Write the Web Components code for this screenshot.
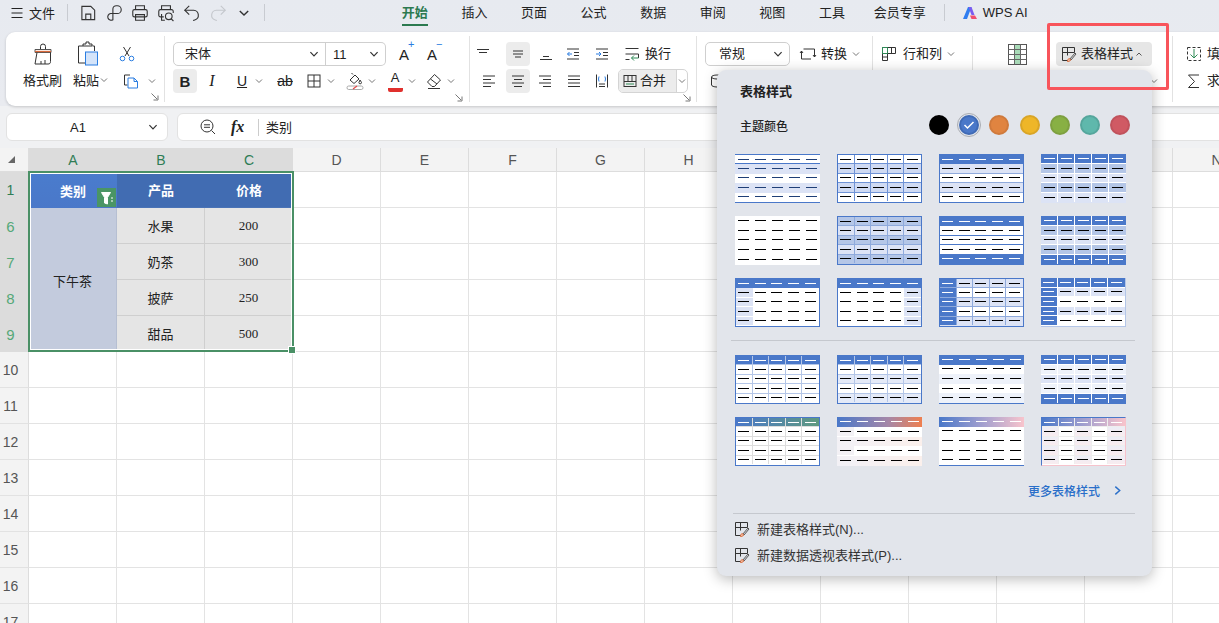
<!DOCTYPE html>
<html lang="zh">
<head>
<meta charset="UTF-8" />
<title>表格样式</title>
<style>
  html, body { margin: 0; height: 100%; overflow: hidden; background: #fff; }
  body { font-family: "Liberation Sans", "Noto Sans CJK SC", sans-serif; color: #262626; }
</style>
</head>
<body>
<x-app></x-app>
<script>
const ICONS = {
  save: [18, '<path d="M3.5 3h8l3.5 3.5v8.5H3.5z"/><path d="M7 15v-5h4.5v5"/>'],
  pdf: [18, '<path d="M8 15.5V5.5a3 3 0 0 1 3-3h1a3.5 3.5 0 0 1 0 7H6a3 3 0 1 0 2 5.5"/>'],
  print: [18, '<path d="M5 6V2.5h8V6"/><rect x="2.5" y="6" width="13" height="6.5" rx="1.5"/><path d="M5 10.5h8v5H5z"/>'],
  preview: [18, '<path d="M5 6V2.5h8V6"/><path d="M7 12.5H4a1.5 1.5 0 0 1-1.500-1.500V7.500A1.500 1.500 0 0 1 4 6h10a1.500 1.500 0 0 1 1.500 1.500V9"/><path d="M5 10v5.500h3"/><circle cx="11.500" cy="12" r="3"/><path d="M13.700 14.200l2 2"/>'],
  undo: [18, '<path d="M6.500 2.500L2.500 6.500l4 4"/><path d="M2.500 6.500h8a4.500 4.500 0 0 1 1 8.800l-1.500.500"/>'],
  redo: [18, '<path d="M11.500 2.500l4 4-4 4" stroke="#c4c7cc"/><path d="M15.500 6.500h-8a4.500 4.500 0 0 0-1 8.800l1.500.500" stroke="#c4c7cc"/>'],
  chev: [10, '<path d="M2 3.500l3 3 3-3"/>'],
  chevg: [10, '<path d="M2 3.500l3 3 3-3" stroke="#777"/>'],
  chevup: [10, '<path d="M2.500 6.500l2.500-2.500 2.500 2.500" stroke="#555"/>'],
  menu: [14, '<path d="M1.500 2.500h11M1.500 7h11M1.500 11.500h11" stroke="#222"/>'],
  brush: [26, '<path d="M10.500 8V5.500a2.500 2.500 0 0 1 5 0V8"/><path d="M5 8.500h16v3H5z" stroke="#555"/><path d="M5 10.500h16" stroke="#d9693a" stroke-width="1.300"/><path d="M7 11.500l-2 11.500h13c1.500 0 2.500-.5 2.500-2.500v-9"/><path d="M11 23v-3M15 23v-4"/>'],
  paste: [26, '<path d="M9 5H4.500v17H11"/><path d="M9 5V3h3V1h3v2h3v2H9z"/><path d="M18.500 5h2v5"/><rect x="11.500" y="11" width="12" height="13" fill="#d4e4fa" stroke="#2a7de1"/>'],
  cut: [18, '<path d="M5.500 2l5.500 9M12.500 2L7 11"/><circle cx="4.500" cy="13.500" r="2.300" stroke="#2a7de1"/><circle cx="13.500" cy="13.500" r="2.300" stroke="#2a7de1"/>'],
  copy: [18, '<path d="M8 3H2.500v10H5.500"/><path d="M6 6h6l3.500 3.500V16H6z" stroke="#2a7de1"/><path d="M12 6v3.500h3.500" stroke="#2a7de1"/>'],
  border: [16, '<rect x="2" y="2" width="12" height="12"/><path d="M8 2v12M2 8h12"/>'],
  fill: [20, '<path d="M5 9l5-5 4 4-5 4.500z"/><path d="M8 3.500L6.500 2"/><path d="M15 9l1.500 2.500a1.300 1.300 0 0 1-2.600 0z"/><rect x="2" y="15" width="16" height="3.500" rx="1.700" stroke="#aaa"/><path d="M8 18l4-3" stroke="#e34d4d" stroke-width="1.300"/>'],
  eraser: [18, '<path d="M9.500 2.500l6 5.500-6 6.500H7L2.500 10z"/><path d="M5.500 7l6.500 5"/><path d="M3 16.500h12"/>'],
  alignTop: [16, '<path d="M2 3.500h12M4 6.500h8"/>'],
  alignMid: [16, '<path d="M3 6h10M3 9h10M5 12h6" transform="translate(0,-1)"/>'],
  alignBot: [16, '<path d="M5 10.500h6M2 13.500h12"/>'],
  indentL: [16, '<path d="M2 3h12M9 6.500h5M9 9.500h5M2 13h12"/><path d="M7 8H2.500M4.500 6l-2 2 2 2" stroke="#2a7de1"/>'],
  indentR: [16, '<path d="M2 3h12M9 6.500h5M9 9.500h5M2 13h12"/><path d="M2 8h5M5 6l2 2-2 2" stroke="#2a7de1"/>'],
  wrap: [18, '<path d="M2.500 3.500h13M2.500 14.500h4M2.500 9h13v4"/><path d="M15.500 13H8.500M11 10.500l-2.500 2.500 2.500 2.500" stroke="#2e8b57"/>'],
  left: [16, '<path d="M2 3h12M2 6.500h8M2 10h12M2 13.500h8"/>'],
  center: [16, '<path d="M2 3h12M4 6.500h8M2 10h12M4 13.500h8"/>'],
  right: [16, '<path d="M2 3h12M6 6.500h8M2 10h12M6 13.500h8"/>'],
  just: [16, '<path d="M2 3h12M2 6.500h12M2 10h12M2 13.500h12"/>'],
  dist: [16, '<path d="M2.500 1.500v13M13.500 1.500v13"/><path d="M5 3.500L4.500 6 5 8.500M11 3.500l.5 2.500-.5 2.500" stroke="#2a7de1"/><path d="M5 11h6M5 13.500h6"/>'],
  merge: [16, '<rect x="2" y="2.500" width="12" height="11"/><path d="M6 2.500v6M10 2.500v6M2 8.500h12"/><path d="M4 11h8" stroke="#2e8b57"/>'],
  convert: [18, '<path d="M6 4h9.500v8"/><path d="M12 14H2.500V6"/><path d="M2.500 6L1 8M2.500 6L4 8"/><path d="M15.500 12L14 10M15.500 12L17 10" /><path d="M4.500 4h1.500"/>'],
  rowcol: [18, '<path d="M2.500 2.500h13v6h-13z"/><path d="M2.500 8.500h5v7h-5z"/><path d="M2.500 12h5M7.500 2.500v6M11.500 2.500v6"/><path d="M2.500 2.500h5v6h-5z" stroke="#2e8b57"/>'],
  cond: [24, '<rect x="9.500" y="2.500" width="6" height="20" style="fill:#a9dbb8;stroke:none"/><rect x="3.500" y="2.500" width="18" height="20" stroke="#555"/><path d="M3.500 7.500h18M3.500 12.500h18M3.500 17.500h18M9.500 2.500v20M15.500 2.500v20" stroke="#666"/>'],
  tstyle: [16, '<path d="M7 14.500H1.500v-13h12v5"/><path d="M1.500 6.500h12M6.500 1.500v8"/><path d="M8.500 13.500l5.500-6.500 1 1-5 6z" stroke="#555"/><path d="M6.500 15.500c2 .2 3-.8 3-2l-1.500-1c-1 .5-1.500 1.500-1.500 3z" stroke="#d9693a" fill="#f4c7ad"/>'],
  fillDown: [18, '<rect x="2.500" y="2.500" width="13" height="13" stroke-dasharray="3 2"/><path d="M9 4v9M5.500 9.500L9 13l3.500-3.500" stroke="#2e8b57"/>'],
  sum: [18, '<path d="M14 3H3.500l6 6.500-6 6H14"/>'],
  find: [18, '<circle cx="8" cy="8" r="6"/><path d="M5 6.800h6M5 9.300h6M12.500 12.500l3.500 3.500"/>'],
  hidden: [16, '<ellipse cx="8" cy="4" rx="5.500" ry="2"/><path d="M2.500 4v8c0 1 2.500 2 5.500 2"/>'],
  more: [10, '<path d="M3 1.500L7 5 3 8.500" stroke="#2a6fc9" stroke-width="1.300"/>'],
  launch: [8, '<path d="M.5.500L6 6M7 2.500V7H2.500" stroke="#777"/>'],
  funnel: [14, '<path d="M1.500 1.500h9L7.500 6.500V13l-3-1V6.500z" fill="#fff" stroke="#fff"/><path d="M11 7h2M11 10h2" stroke="#fff"/>']
};

class XIcon extends HTMLElement {
  connectedCallback() {
    const spec = ICONS[this.getAttribute("name")];
    const size = this.getAttribute("size") || spec[0];
    const shadow = this.attachShadow({ mode: "open" });
    shadow.innerHTML = `<style>:host{display:inline-flex;flex:none;line-height:0}svg{fill:none;stroke:#333;stroke-width:1}</style>
      <svg width="${size}" height="${size}" viewBox="0 0 ${spec[0]} ${spec[0]}">${spec[1]}</svg>`;
  }
}
customElements.define("x-icon", XIcon);

class XTitlebar extends HTMLElement {
  connectedCallback() {
    const shadow = this.attachShadow({ mode: "open" });
    const quick = ["save", "pdf", "print", "preview", "undo", "redo"].map(n => `<span class="q"><x-icon name="${n}" size="20"></x-icon></span>`).join("");
    const tabs = ["开始", "插入", "页面", "公式", "数据", "审阅", "视图", "工具"].map((t, i) => `<span class="tab ${i ? "" : "on"}">${t}</span>`).join("");
    shadow.innerHTML = `<style>
      :host{display:flex;align-items:center;height:32px;padding-bottom:7px;font-size:13px;color:#222;box-sizing:border-box}
      .left{display:flex;align-items:center;width:385px;flex:none;padding-left:10px;box-sizing:border-box}
      .file{margin-left:5px}
      .sep{width:1px;height:17px;background:#c8cbd1;flex:none}
      .q{width:26px;display:flex;justify-content:center}
      .tab{width:59.600px;text-align:center;flex:none;line-height:25px;position:relative;height:25px}
      .on{color:#2c7a50;font-weight:700}
      .on::after{content:"";position:absolute;left:17px;right:17px;bottom:-1px;height:2px;background:#2c7a50}
      .ai{display:flex;align-items:center;gap:5px;margin-left:17px;font-size:13px}
    </style>
    <div class="left">
      <x-icon name="menu"></x-icon><span class="file">文件</span>
      <span class="sep" style="margin:0 7px 0 12px"></span>
      ${quick}
      <span class="q"><x-icon name="chev" size="14"></x-icon></span>
      <span class="sep" style="margin-left:7px"></span>
    </div>
    ${tabs}
    <span class="tab" style="width:62px;margin-left:7px">会员专享</span>
    <span class="sep" style="margin-left:13px"></span>
    <span class="ai">
      <svg width="16" height="14" viewBox="0 0 16 14">
        <path d="M1 13L6 1h3.500L5 13z" fill="#2f7df0"/><path d="M6.500 1h3l3 8-3 0z" fill="#7a5cf0"/><path d="M8 9.500h5l2 3.500H9.500z" fill="#f0506e"/>
      </svg>WPS AI</span>`;
  }
}
customElements.define("x-titlebar", XTitlebar);

class XRibbon extends HTMLElement {
  connectedCallback() {
    const shadow = this.attachShadow({ mode: "open" });
    shadow.innerHTML = `<style>
      :host{display:flex;height:74px;width:1300px;margin-left:6px;background:#fff;border-radius:9px;box-shadow:0 1px 3px rgba(0,0,0,.18);font-size:13px;color:#222;flex:none}
      .g{box-sizing:border-box;height:74px;padding-top:10px;position:relative;flex:none;display:flex;flex-direction:column}
      .d::after{content:"";position:absolute;right:0;top:4px;bottom:4px;width:1px;background:#e2e2e2}
      .r{display:flex;align-items:center;height:24px}
      .r2{display:flex;align-items:flex-start;height:35px;margin-top:3px}
      .t{display:flex;align-items:center;justify-content:center;height:24px;width:24px;border-radius:4px;flex:none}
      .on{background:#ececec}
      .c{display:flex;width:10px;height:24px;align-items:center;justify-content:center;flex:none}
      .launch{align-self:flex-end;margin-bottom:2px;display:flex;flex:none}
      .box{display:flex;align-items:center;justify-content:space-between;box-sizing:border-box;height:24px;border:1px solid #cfcfcf;padding:0 5px 0 11px}
      .tx{flex:none;white-space:nowrap;padding-bottom:3px}
      .i1{display:grid;grid-template-columns:39px 37px 40px;column-gap:11px;padding-left:17px;height:100%;grid-template-rows:24px 24px;row-gap:3px;align-items:center}
      .i1 .m{display:flex;justify-content:center}
      .bold{font-weight:700;font-size:15px}
      .ital{font-family:"Liberation Serif",serif;font-style:italic;font-size:16px}
      .ul{text-decoration:underline;font-size:14px}
      .st{text-decoration:line-through;font-size:14px}
      .aa{font-size:15px;position:relative}
      .aa sup{color:#2a7de1;font-size:11px;position:absolute;left:9px;top:-7px;vertical-align:baseline;line-height:1}
      .col{display:flex;flex-direction:column;align-items:center;font-size:13px;line-height:14px;border-bottom:4px solid #e0302d;border-radius:0 0 2px 2px;width:15px;height:17px}
    </style>
    <div class="g d" style="width:159px">
      <div class="i1">
        <span class="m"><x-icon name="brush"></x-icon></span>
        <span class="m" style="margin-left:-10px"><x-icon name="paste"></x-icon></span>
        <span class="m" style="margin-left:-28px"><x-icon name="cut"></x-icon></span>
        <span class="tx">格式刷</span>
        <span class="tx" style="display:flex;align-items:center">粘贴<span class="c"><x-icon name="chevg"></x-icon></span></span>
        <span style="display:flex;align-items:center;margin-left:-2px"><span class="t" style="width:24px"><x-icon name="copy"></x-icon></span><span class="c" style="margin-left:4px"><x-icon name="chevg"></x-icon></span></span>
      </div>
      <span class="launch" style="position:absolute;right:6px;bottom:3px"><x-icon name="launch"></x-icon></span>
    </div>

    <div class="g d" style="width:305px;padding-left:8px">
      <div class="r">
        <div class="box" style="width:153px;border-radius:5px 0 0 5px;border-right:1px solid #cfcfcf"><span class="tx">宋体</span><x-icon name="chev" size="12"></x-icon></div>
        <div class="box" style="width:61px;margin-left:-1px;border-left:0;border-radius:0 5px 5px 0;padding-left:8px"><span>11</span><x-icon name="chev" size="12"></x-icon></div>
        <span class="t" style="margin-left:6px"><span class="aa">A<sup>+</sup></span></span>
        <span class="t" style="margin-left:4px"><span class="aa">A<sup>−</sup></span></span>
      </div>
      <div class="r2">
        <span class="t on bold">B</span>
        <span class="t ital" style="margin-left:3px">I</span>
        <span class="t ul" style="margin-left:6px">U</span><span class="c"><x-icon name="chevg"></x-icon></span>
        <span class="t st" style="margin-left:9px">ab</span>
        <span class="t" style="margin-left:5px"><x-icon name="border"></x-icon></span><span class="c"><x-icon name="chevg"></x-icon></span>
        <span class="t" style="margin-left:7px"><x-icon name="fill"></x-icon></span><span class="c"><x-icon name="chevg"></x-icon></span>
        <span class="t" style="margin-left:6px"><span class="col">A</span></span><span class="c"><x-icon name="chevg"></x-icon></span>
        <span class="t" style="margin-left:5px"><x-icon name="eraser"></x-icon></span><span class="c"><x-icon name="chevg"></x-icon></span>
        <span class="launch" style="margin-left:-1px"><x-icon name="launch"></x-icon></span>
      </div>
    </div>

    <div class="g d" style="width:227px;padding-left:0">
      <div class="r" style="padding-left:1px">
        <span class="t"><x-icon name="alignTop"></x-icon></span>
        <span class="t on" style="margin-left:11px"><x-icon name="alignMid"></x-icon></span>
        <span class="t" style="margin-left:4px"><x-icon name="alignBot"></x-icon></span>
        <span class="t" style="margin-left:3px"><x-icon name="indentL"></x-icon></span>
        <span class="t" style="margin-left:5px"><x-icon name="indentR"></x-icon></span>
        <span class="t" style="margin-left:6px"><x-icon name="wrap"></x-icon></span>
        <span class="tx" style="margin-left:1px">换行</span>
      </div>
      <div class="r2" style="padding-left:7px">
        <span class="t"><x-icon name="left"></x-icon></span>
        <span class="t on" style="margin-left:5px"><x-icon name="center"></x-icon></span>
        <span class="t" style="margin-left:3px"><x-icon name="right"></x-icon></span>
        <span class="t" style="margin-left:5px"><x-icon name="just"></x-icon></span>
        <span class="t" style="margin-left:4px"><x-icon name="dist"></x-icon></span>
        <span style="display:flex;align-items:center;height:24px;width:70px;margin-left:4px;box-sizing:border-box;border:1px solid #d4d4d4;border-radius:5px;flex:none;overflow:hidden">
          <span style="display:flex;align-items:center;gap:2px;background:#ececec;height:100%;padding-left:3px;width:54px"><x-icon name="merge"></x-icon><span class="tx">合并</span></span>
          <span class="c" style="flex:1;border-left:1px solid #d4d4d4;height:100%"><x-icon name="chevg"></x-icon></span>
        </span>
        <span class="launch" style="margin-left:-5px"><x-icon name="launch"></x-icon></span>
      </div>
    </div>

    <div class="g d" style="width:176px;padding-left:8px">
      <div class="r">
        <div class="box" style="width:85px;border-radius:5px;padding-left:13px"><span class="tx">常规</span><x-icon name="chev" size="12"></x-icon></div>
        <span class="t" style="margin-left:6px"><x-icon name="convert"></x-icon></span>
        <span class="tx" style="margin-left:1px">转换</span>
        <span class="c" style="margin-left:4px"><x-icon name="chevg"></x-icon></span>
      </div>
      <div class="r2"><span class="t"><x-icon name="hidden"></x-icon></span></div>
    </div>

    <div class="g d" style="width:100px;padding-left:4px">
      <div class="r">
        <span class="t"><x-icon name="rowcol"></x-icon></span>
        <span class="tx" style="margin-left:2px">行和列</span>
        <span class="c" style="margin-left:4px"><x-icon name="chevg"></x-icon></span>
      </div>
    </div>

    <div class="g d" style="width:200px;padding-left:32px">
      <div class="r">
        <span class="t"><x-icon name="cond"></x-icon></span>
        <span style="display:flex;align-items:center;height:24px;width:96px;margin-left:27px;background:#e6e6e6;border-radius:4px;flex:none;padding-left:5px;box-sizing:border-box">
          <x-icon name="tstyle"></x-icon><span class="tx" style="margin-left:4px">表格样式</span><span class="c" style="margin-left:1px"><x-icon name="chevup"></x-icon></span>
        </span>
      </div>
      <div class="r2" style="padding-left:144px"><span class="c"><x-icon name="chevg"></x-icon></span></div>
    </div>

    <div class="g" style="padding-left:12px">
      <div class="r"><x-icon name="fillDown"></x-icon><span class="tx" style="margin-left:4px">填</span></div>
      <div class="r2"><span style="display:flex;align-items:center;height:24px"><x-icon name="sum"></x-icon><span class="tx" style="margin-left:4px">求</span></span></div>
    </div>`;
  }
}
customElements.define("x-ribbon", XRibbon);

class XFormula extends HTMLElement {
  connectedCallback() {
    const shadow = this.attachShadow({ mode: "open" });
    shadow.innerHTML = `<style>
      :host{display:flex;height:28px;margin-top:7px;padding-left:6px;gap:9px;font-size:13px;color:#222;flex:none}
      .b{background:#fff;border:1px solid #e2e2e2;border-radius:6px;box-sizing:border-box;height:28px;display:flex;align-items:center;flex:none}
      .name{width:162px;justify-content:space-between;padding:0 8px 0 63px}
      .bar{width:1100px;padding-left:21px}
      .fx{font-family:"Liberation Serif",serif;font-style:italic;font-weight:700;font-size:16px;margin-left:14px;width:18px}
      .sep{width:1px;height:17px;background:#ccc;margin:0 7px 0 9px}
      .tx{padding-bottom:2px}
    </style>
    <div class="b name"><span>A1</span><x-icon name="chev" size="12"></x-icon></div>
    <div class="b bar"><x-icon name="find"></x-icon><span class="fx">fx</span><span class="sep"></span><span class="tx">类别</span></div>`;
  }
}
customElements.define("x-formula", XFormula);

class XSheet extends HTMLElement {
  connectedCallback() {
    const shadow = this.attachShadow({ mode: "open" });
    const letters = "ABCDEFGHIJKLMN".split("");
    const rows = [1, 6, 7, 8, 9, 10, 11, 12, 13, 14, 15, 16, 17];
    let html = `<div class="cor"><i></i></div>`;
    letters.forEach((l, i) => { html += `<div class="ch ${i < 3 ? "sel" : ""}">${l}</div>`; });
    const data = {
      "0,1": `<div class="c head a">类别<span class="flt"><x-icon name="funnel"></x-icon></span></div>`,
      "0,2": `<div class="c head">产品</div>`, "0,3": `<div class="c head">价格</div>`,
      "1,1": `<div class="c group" style="grid-row:span 4">下午茶</div>`,
      "1,2": `<div class="c body">水果</div>`, "1,3": `<div class="c body num">200</div>`,
      "2,2": `<div class="c body">奶茶</div>`, "2,3": `<div class="c body num">300</div>`,
      "3,2": `<div class="c body">披萨</div>`, "3,3": `<div class="c body num">250</div>`,
      "4,2": `<div class="c body">甜品</div>`, "4,3": `<div class="c body num">500</div>`
    };
    rows.forEach((n, r) => {
      html += `<div class="rh ${r < 5 ? "sel" : ""} ${r === 0 ? "first" : ""}">${n}</div>`;
      for (let c = 1; c <= 14; c++) {
        if (c === 1 && r >= 2 && r <= 4) continue;
        html += data[r + "," + c] || `<div class="c"></div>`;
      }
    });
    shadow.innerHTML = `<style>
      :host{display:block;margin-top:7px;position:relative;background:#fff;flex:none;width:1261px}
      .grid{display:grid;grid-template-columns:29px repeat(14,88px);grid-template-rows:24px repeat(13,36px);font-size:13px}
      .cor,.ch,.rh{background:#f3f3f3;box-sizing:border-box;display:flex;align-items:center;justify-content:center;color:#555;font-size:14px}
      .cor{border-bottom:1px solid #ddd;border-right:1px solid #ddd}
      .cor i{width:0;height:0;border-left:7px solid transparent;border-bottom:7px solid #666;margin-left:-6px}
      .ch{border-right:1px solid #dcdcdc;border-bottom:1px solid #ddd}
      .rh{border-bottom:1px solid #e2e2e2;border-right:1px solid #ddd;padding-right:7px}
      .ch.sel{background:#dcdcdc;color:#2f7d55;border-right:0}
      .rh.sel{background:#dcdcdc;color:#55a878;font-size:15px;border-bottom:0}
      .rh.first{color:#2f7d55;font-size:14px}
      .c{box-sizing:border-box;border-right:1px solid #e3e3e3;border-bottom:1px solid #e3e3e3;display:flex;align-items:center;justify-content:center;position:relative;color:#222;min-width:0}
      .head{background:#416cb2;color:#fff;font-weight:700;border:0;border-bottom:1px solid #4a73b6}
      .a{background:linear-gradient(180deg,#4a7ccd,#4a78c9);border:0}
      .group{background:#c3cbdd;border:0;border-right:1px solid #b6bfd2;font-size:13px}
      .body{background:#e5e5e5;border-right:1px solid #cfcfcf;border-bottom:1px solid #cfcfcf}
      .num{font-family:"Liberation Serif",serif;font-size:13px}
      .flt{position:absolute;right:1px;bottom:1px;width:19px;height:19px;background:#4a9565;display:flex;align-items:center;justify-content:center}
      .sel-box{position:absolute;left:28px;top:23px;width:266px;height:181px;box-sizing:border-box;border:2px solid #4a9066;box-shadow:inset 0 0 0 1px #fff;pointer-events:none}
      .handle{position:absolute;right:-4px;bottom:-4px;width:6px;height:6px;background:#4a9066;border:1px solid #fff}
    </style>
    <div class="grid">${html}</div>
    <div class="sel-box"><span class="handle"></span></div>`;
  }
}
customElements.define("x-sheet", XSheet);

const FILLS = {
  b: "#4a78c9", w: "#fff", l: "#dce3f5", m: "#b4c6e7", e: "#eef2fa", f: "#e4eaf8", s: "#cfdaf3",
  g1: "linear-gradient(90deg,#4a78c9,#5f9a80)",
  g2: "linear-gradient(90deg,#4a78c9,#a587a8 60%,#ef7f4f)",
  g3: "linear-gradient(90deg,#4a78c9,#a9a2cf 55%,#f8c4cc)",
  p: "linear-gradient(90deg,#f2f1f7,#fbf0ec)", q: "#f3f1f5", v: "linear-gradient(180deg,#ecedf6,#f9ecef)"
};

class XThumb extends HTMLElement {
  connectedCallback() {
    const a = n => this.getAttribute(n);
    const rows = a("rows").split(" ");
    const frame = a("frame") || "";
    const fc = a("fc") || "#4a78c9";
    const h = a("h") || "transparent", v = a("v") || "transparent", hh = a("hh") || h;
    const dash = a("dash") || "#000";
    let html = "";
    rows.forEach((tok, r) => {
      const border = r < 4 ? (r === 0 ? hh : h) : "transparent";
      html += `<div class="row" style="background:${FILLS[tok]};border-bottom-color:${border}">`;
      for (let c = 0; c < 5; c++) {
        let cell = tok, head = tok === "b" || tok[0] === "g";
        if (!head && c === 0 && a("first")) cell = a("first");
        if (!head && c === 4 && a("last")) cell = a("last");
        if (!head && a("alt") && c % 2 === 0) cell = a("alt");
        const light = cell === "b" || cell[0] === "g";
        const bg = cell === tok ? "transparent" : FILLS[cell];
        html += `<div class="cell" style="background:${bg};border-right-color:${c < 4 ? v : "transparent"}"><i style="background:${light ? "#fff" : dash}"></i></div>`;
      }
      html += `</div>`;
    });
    const side = s => (frame.includes(s) ? "1px" : "0");
    const shadow = this.attachShadow({ mode: "open" });
    shadow.innerHTML = `<style>
      :host{display:grid;grid-template-rows:repeat(5,1fr);box-sizing:border-box;width:85px;height:49px;background:#fff;
        border-style:solid;border-color:${fc};border-width:${side("t")} ${side("r")} ${side("b")} ${side("l")}}
      .row{display:grid;grid-template-columns:repeat(5,1fr);border-bottom:1px solid transparent;min-height:0}
      .cell{display:flex;align-items:center;justify-content:center;border-right:1px solid transparent;min-width:0}
      i{display:block;width:11px;height:1px}
    </style>${html}`;
  }
}
customElements.define("x-thumb", XThumb);

class XPopover extends HTMLElement {
  connectedCallback() {
    const shadow = this.attachShadow({ mode: "open" });
    const dots = [["#000", "#000"], ["#4a78c9", "#3f6ab5", 1], ["#e08440", "#cf7a3c"], ["#eeb628", "#d9a526"], ["#88b044", "#7ea040"], ["#5fb8ac", "#55a69c"], ["#d05a64", "#c0525c"]]
      .map(d => `<span class="dot ${d[2] ? "cur" : ""}" style="background:${d[0]};border-color:${d[1]}">${d[2] ? '<svg width="14" height="14" viewBox="0 0 14 14"><path d="M2.500 7l3 3 6-6" fill="none" stroke="#fff" stroke-width="1.500"/></svg>' : ""}</span>`).join("");
    const G = "#8faadc", L = "#b4c6e7", W = "#fff";
    const up = [
      `rows="w l w l w" frame="tb" hh="#4a78c9" dash="#1f3f77"`,
      `rows="w s w s w" frame="trbl" h="#6f93d6" v="#6f93d6"`,
      `rows="b l w l w" frame="trbl" hh="#4a78c9" h="${G}"`,
      `rows="b m l m l" h="${W}" v="${W}"`,
      `rows="w w w w w"`,
      `rows="m l m l m" frame="trbl" h="${G}" v="${G}"`,
      `rows="b w w w b" frame="trbl" h="#4a78c9"`,
      `rows="b m l m b" h="${W}" v="${W}"`,
      `rows="b w w w w" frame="trbl" first="l"`,
      `rows="b w w w w" frame="trbl" last="l"`,
      `rows="l w l w l" frame="trbl" first="b" h="${G}" v="${G}"`,
      `rows="b l w l w" first="b" h="${W}" v="${W}" frame="rb" fc="${L}"`
    ];
    const down = [
      `rows="b w w w w" frame="trbl" h="${L}" v="${L}"`,
      `rows="b w f w f" frame="trbl" h="${L}" v="${L}"`,
      `rows="b w e w e" frame="b"`,
      `rows="b e l e b" h="${W}" v="${W}"`,
      `rows="g1 w w w w" frame="trbl" h="#ddd" v="#ddd"`,
      `rows="g2 w p w p" first="q"`,
      `rows="g3 w w w w" frame="b"`,
      `rows="g3 w w w w" alt="v" h="#eee" v="#eee" frame="trbl" fc="#4a78c9 #f6c3cc #f6c3cc #4a78c9"`
    ];
    const grid = list => `<div class="thumbs">${list.map(s => `<x-thumb ${s}></x-thumb>`).join("")}</div>`;
    shadow.innerHTML = `<style>
      :host{position:absolute;left:717px;top:70px;width:435px;height:506px;box-sizing:border-box;background:#e2e5eb;border-radius:9px;box-shadow:0 3px 14px rgba(0,0,0,.28);display:flex;flex-direction:column;font-size:13px;color:#222;padding-top:13px}
      .title{font-weight:700;font-size:13px;line-height:18px;padding-left:23px}
      .theme{display:flex;align-items:center;height:20px;margin-top:14px;padding:0 23px}
      .theme b{font-size:12px;font-weight:500;flex:1}
      .dots{display:flex;gap:10.170px;margin-right:-1px}
      .dot{box-sizing:border-box;width:20px;height:20px;border-radius:50%;border:2px solid;display:flex;align-items:center;justify-content:center;position:relative}
      .cur{outline:1.500px solid #a9acb2;outline-offset:1.500px;background-clip:padding-box}
      .thumbs{display:grid;grid-template-columns:repeat(4,85px);column-gap:17px;row-gap:13px;padding-left:18px}
      .hr{height:1px;background:#c5c8ce;margin:13px 17px 14px 14px}
      .link{display:flex;justify-content:flex-end;align-items:center;height:16px;margin-top:16px;padding-right:29px;color:#2a6fc9;font-size:12px;font-weight:500}
      .link x-icon{margin-left:12px}
      .hr2{height:1px;background:#c5c8ce;margin:15px 17px 2px 16px}
      .item{display:flex;align-items:center;height:26px;padding-left:17px;gap:7px;color:#333;font-size:13px}
      .item span{padding-bottom:2px}
    </style>
    <div class="title">表格样式</div>
    <div class="theme"><b>主题颜色</b><div class="dots">${dots}</div></div>
    <div style="height:19px"></div>
    ${grid(up)}
    <div class="hr"></div>
    ${grid(down)}
    <div class="link">更多表格样式<x-icon name="more" size="11"></x-icon></div>
    <div class="hr2"></div>
    <div class="item"><x-icon name="tstyle"></x-icon><span>新建表格样式(N)...</span></div>
    <div class="item"><x-icon name="tstyle"></x-icon><span>新建数据透视表样式(P)...</span></div>`;
  }
}
customElements.define("x-popover", XPopover);

class XApp extends HTMLElement {
  connectedCallback() {
    const shadow = this.attachShadow({ mode: "open" });
    shadow.innerHTML = `<style>
      :host{display:flex;flex-direction:column;position:relative;width:1219px;height:623px;overflow:hidden;background:linear-gradient(180deg,#e7eaf0 0,#e9ebf0 106px,#f0f1f3 106px,#f0f1f3 148px,#fff 148px)}
      .mark{position:absolute;left:1047px;top:23px;width:122px;height:67px;box-sizing:border-box;border:3px solid #f8545b;border-radius:2px}
    </style>
    <x-titlebar></x-titlebar>
    <x-ribbon></x-ribbon>
    <x-formula></x-formula>
    <x-sheet></x-sheet>
    <x-popover></x-popover>
    <div class="mark"></div>`;
  }
}
customElements.define("x-app", XApp);
</script>
</body>
</html>
